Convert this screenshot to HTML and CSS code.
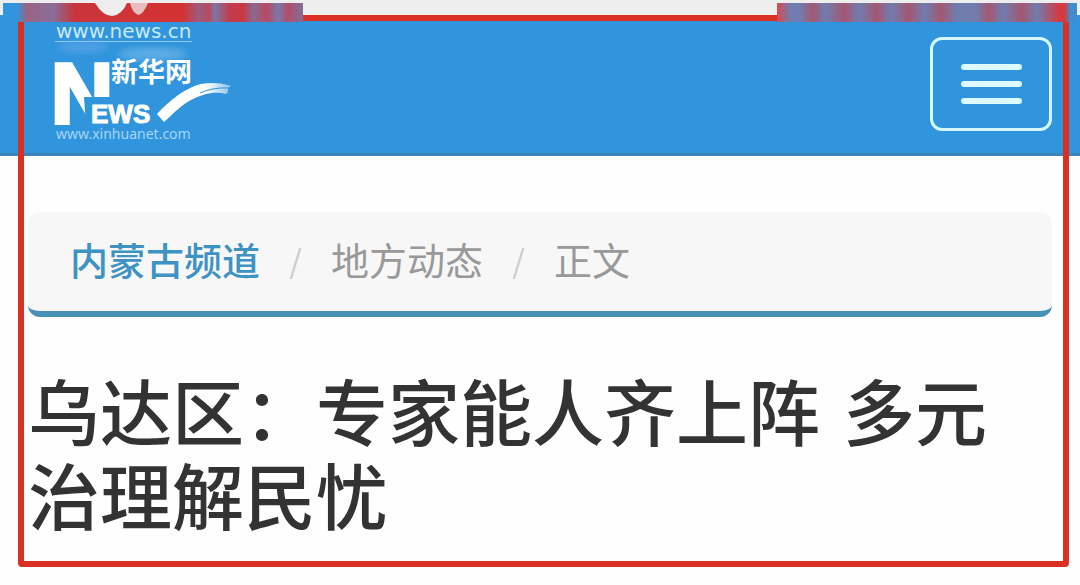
FILE: index.html
```html
<!DOCTYPE html>
<html lang="zh-CN">
<head>
<meta charset="utf-8">
<meta name="viewport" content="width=device-width, initial-scale=1">
<title>乌达区：专家能人齐上阵 多元治理解民忧</title>
<link rel="stylesheet" href="styles.css">
</head>
<body>
<div class="page">
  <header class="navbar">
    <a class="brand" href="#" aria-label="新华网">
      <svg class="logo" viewBox="0 0 180 122" width="180" height="122">
        <defs>
          <linearGradient id="fade" x1="0" y1="0" x2="1" y2="0">
            <stop offset=".65" stop-color="#fff"/>
            <stop offset="1" stop-color="#fff" stop-opacity=".45"/>
          </linearGradient>
          <filter id="soft"><feGaussianBlur stdDeviation="3"/></filter>
        </defs>
        <ellipse cx="28" cy="27" rx="25" ry="6" fill="#6aa9ee" opacity=".5" filter="url(#soft)"/>
        <ellipse cx="98" cy="34" rx="34" ry="7" fill="#a9d6f5" opacity=".35" filter="url(#soft)"/>
        <text class="logo-url" x="1" y="18">www.news.cn</text>
        <path d="M0 21.5h137" stroke="#8cc8f0"/>
        <text class="logo-n" x="-4" y="103">N</text>
        <path class="logo-cut" d="M29 77h26v29H31z"/>
        <text class="logo-ews" x="36" y="103">EWS</text>
        <text class="logo-cn" x="56" y="62">新华网</text>
        <path d="M102 94C115 80 130 68 146 64C158 62 167 63 176 66C170 69 176 70 171 74C160 71 148 74 138 79C126 85 119 93 109 102Z" fill="url(#fade)"/>
        <path d="M145 73Q158 67 175 68" fill="none" stroke="#3095dc" stroke-width="1"/>
        <text class="logo-site" x="1" y="119">www.xinhuanet.com</text>
      </svg>
    </a>
    <button class="menu-button" type="button" aria-label="菜单">
      <span class="menu-line"></span>
      <span class="menu-line"></span>
      <span class="menu-line"></span>
    </button>
  </header>
  <main class="content">
    <nav aria-label="面包屑">
      <ol class="breadcrumb">
        <li class="crumb"><a class="channel" href="#">内蒙古频道</a></li>
        <li class="crumb"><a class="section" href="#">地方动态</a></li>
        <li class="crumb">正文</li>
      </ol>
    </nav>
    <h1 class="title">乌达区：专家能人齐上阵 多元治理解民忧</h1>
  </main>
  <div class="top-strip" aria-hidden="true"></div>
  <div class="frame" aria-hidden="true"></div>
  <div class="patch patch-left" aria-hidden="true">
    <svg width="70" height="16" viewBox="0 0 70 16"><path d="M5 0H37Q32 12 22 13Q13 13 5 0Z" fill="#eee"/><path d="M40 0H58Q53 12 48 12Q42 9 40 0Z" fill="#eee" opacity=".75"/></svg>
  </div>
  <div class="patch patch-right" aria-hidden="true"></div>
</div>
</body>
</html>
```
FILE: styles.css
```css
* {
  box-sizing: border-box;
}

body {
  margin: 0;
  background: #fefefe;
  color: #333;
  font-family: "Noto Sans CJK SC", sans-serif;
}

.page {
  position: relative;
  min-height: 100vh;
  padding-bottom: 40px;
}

.navbar {
  display: flex;
  justify-content: space-between;
  align-items: flex-start;
  padding: 20px 28px 11px 55px;
  background: #3095dc;
  border-bottom: 3px solid #3a86b8;
}

.brand,
.logo {
  display: block;
}

.logo {
  overflow: visible;
}

.logo text {
  fill: #fff;
}

.logo .logo-url {
  fill: #c9e8fb;
  font: 20px "DejaVu Sans", sans-serif;
}

.logo .logo-n {
  font: bold 86px "Liberation Sans", sans-serif;
  stroke: #fff;
  stroke-width: 4px;
}

.logo .logo-cut {
  fill: #3095dc;
}

.logo .logo-ews {
  font: bold 26px "Liberation Sans", sans-serif;
  stroke: #fff;
  stroke-width: 1px;
}

.logo .logo-cn {
  font: bold 27px "Noto Sans CJK SC", sans-serif;
}

.logo .logo-site {
  fill: #a5d6f7;
  font: 14px "Noto Sans", sans-serif;
}

.menu-button {
  display: flex;
  flex-direction: column;
  align-items: center;
  justify-content: center;
  gap: 11px;
  width: 122px;
  height: 94px;
  margin-top: 17px;
  padding: 0;
  background: transparent;
  border: 3px solid #d4f8ff;
  border-radius: 12px;
}

.menu-line {
  width: 61px;
  height: 6px;
  background: #dcfbff;
  border-radius: 3px;
}

.content {
  padding: 56px 28px 0;
}

.breadcrumb {
  display: flex;
  margin: 0;
  padding: 19px 42px 24px;
  list-style: none;
  background: #f7f7f7;
  border-bottom: 6px solid #4790b8;
  border-radius: 12px;
  color: #999;
  font-size: 38px;
  line-height: 56px;
}

.crumb {
  display: flex;
}

.crumb + .crumb::before {
  content: "/";
  width: 71px;
  color: #ccc;
  font-size: 32px;
  text-align: center;
}

.crumb a {
  color: inherit;
  text-decoration: none;
}

.crumb .channel {
  color: #3f93c4;
  font-weight: 500;
}

.title {
  margin: 56px 0 0;
  font-family: "DejaVu Sans", "Noto Sans CJK SC", sans-serif;
  font-size: 72px;
  font-weight: 500;
  line-height: 84px;
}

.top-strip {
  position: absolute;
  top: 0;
  left: 0;
  width: 100%;
  height: 15px;
  background: #eee;
}

.frame {
  position: absolute;
  inset: 15px 11px 18px 18px;
  border: 6px solid #d93023;
  border-radius: 4px;
  pointer-events: none;
}

.patch {
  position: absolute;
  top: 3px;
  width: 300px;
  height: 19px;
}

.patch svg {
  display: block;
  margin-left: 87px;
}

.patch-left {
  left: 3px;
  background: linear-gradient(90deg, #3095dc 14px, #9b6282 24px, #886e9b 50px, #ca343b 72px, #d43232 180px, #9e5b7e 196px, #b84a60 206px, #7c78a7 212px, #c13d4e 226px, #ca3842 240px, #8b6890 250px, #b64a61 264px, #7878ac 275px, #b24e68 285px, #806f9d 300px);
}

.patch-right {
  right: 3px;
  background: linear-gradient(90deg, #d74950 0, #6e7fb1 14px, #747aaa 24px, #a55770 36px, #6f7db0 48px, #a55770 68px, #6f7db0 82px, #a55770 100px, #6f7db0 114px, #a55770 132px, #6f7db0 148px, #a55770 164px, #6f7db0 180px, #747aaa 200px, #a55770 212px, #6f7db0 226px, #a55770 245px, #6f7db0 260px, #d43a40 282px, #d43a40 288px, #3f8dcd 293px, #3f8dcd 300px);
}
```
